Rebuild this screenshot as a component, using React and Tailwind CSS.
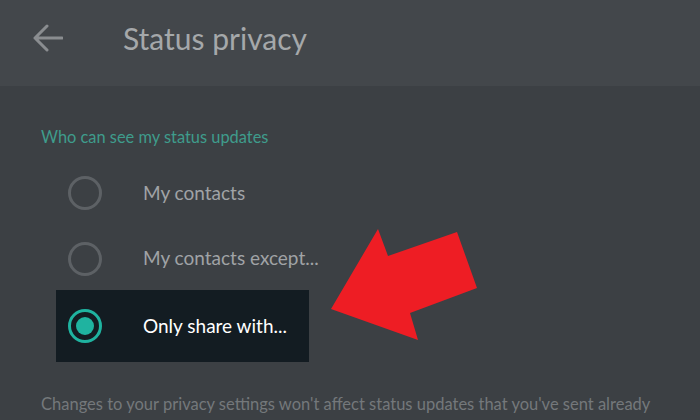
import React from 'react';

const FONT = { fontFamily: 'Lato, "Noto Sans", sans-serif' };

function Radio({ checked }) {
  if (checked) {
    return (
      <svg width="34" height="34" viewBox="0 0 34 34" className="shrink-0">
        <circle cx="17" cy="17" r="15.5" fill="none" stroke="#1fb3a0" strokeWidth="3" />
        <circle cx="17" cy="17" r="9" fill="#1fb3a0" />
      </svg>
    );
  }
  return (
    <svg width="34" height="34" viewBox="0 0 34 34" className="shrink-0">
      <circle cx="17" cy="17" r="15.5" fill="none" stroke="#5d6165" strokeWidth="3" />
    </svg>
  );
}

function Option({ label, className }) {
  return (
    <div className={className}>
      <Radio />
      <span className="text-[19px] text-[#a0a3a6] ml-[41px]">{label}</span>
    </div>
  );
}

export default function App() {
  return (
    <div className="relative w-[700px] h-[420px] overflow-hidden bg-[#3c4044]" style={FONT}>
      <div className="h-[86px] bg-[#43474b] flex items-center pb-[10px]">
        <svg width="30" height="28" viewBox="0 0 30 28" className="ml-[33px]">
          <path d="M2 14 H29 M14 2 L2 14 L14 26" fill="none" stroke="#8a8d90" strokeWidth="3" strokeLinecap="round" strokeLinejoin="round" />
        </svg>
        <h1 className="ml-[60px] text-[30px] text-[#a5a8aa]">Status privacy</h1>
      </div>

      <div className="pt-[39px]">
        <div className="px-[41px] text-[16.4px] leading-6 text-[#3f9c8c]">Who can see my status updates</div>
        <div className="mt-[11px] pl-[68px]">
          <Option label="My contacts" className="h-[66px] flex items-center" />
          <Option label="My contacts except..." className="h-[65px] flex items-center" />
        </div>
        <div className="ml-[56px] w-[253px] h-[72px] bg-[#131c22] flex items-center pl-[12px] -mt-px">
          <Radio checked />
          <span className="text-[19px] text-white ml-[41px]">Only share with...</span>
        </div>
        <p className="mt-[30px] px-[41px] text-[16.5px] leading-6 text-[#74787b] whitespace-nowrap">
          Changes to your privacy settings won't affect status updates that you've sent already
        </p>
      </div>

      <svg className="absolute inset-0 pointer-events-none" width="700" height="420" viewBox="0 0 700 420">
        <polygon points="331,309 378,229 388,256 457,232 477,288 410,313 418,340" fill="#ee1d24" />
      </svg>
    </div>
  );
}
